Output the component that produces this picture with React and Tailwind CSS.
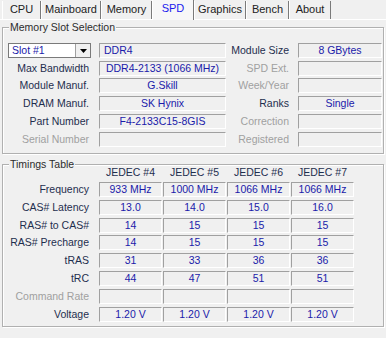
import React from "react";

const FONT = { fontFamily: '"Liberation Sans", Arial, sans-serif' };

function Box({ children, className = "", align = "center" }) {
  const a = align === "left" ? "justify-start pl-[4px]" : "justify-center";
  return (
    <div
      className={`h-[15px] flex items-center ${a} border-t border-l border-t-[#a0a0a0] border-l-[#a0a0a0] border-b border-r border-b-white border-r-white text-[#1a1aaa] leading-none whitespace-nowrap overflow-hidden ${className}`}
    >
      {children}
    </div>
  );
}

function Label({ children, disabled, className = "" }) {
  return (
    <div
      className={`text-right leading-none whitespace-nowrap ${disabled ? "text-[#a0a0a0]" : "text-[#1e2e4e]"} ${className}`}
    >
      {children}
    </div>
  );
}

function Tab({ label, w, selected }) {
  if (selected) {
    return (
      <div
        className={`${w} h-[21px] bg-[#f7f7f7] border-l border-white border-r border-r-[#7a7a7a] flex items-center justify-center text-[#1a1aee] relative z-10 -mb-[1px]`}
      >
        <span className="-mt-[3px]">{label}</span>
      </div>
    );
  }
  return (
    <div
      className={`${w} h-[18px] border-l border-white border-r border-r-[#7a7a7a] flex items-center justify-center text-[#222]`}
    >
      <span className="-mt-[1px]">{label}</span>
    </div>
  );
}

function Group({ title, className = "", children }) {
  return (
    <div className={`relative mx-[2px] border border-[#b0b0b0] shadow-[inset_1px_1px_0_#ffffff,1px_1px_0_#ffffff] ${className}`}>
      <div className="absolute -top-[8px] left-[6px] px-[1px] bg-[#f0f0f0] text-[#2c2c2c] leading-[14px]">
        {title}
      </div>
      {children}
    </div>
  );
}

function InfoRow({ label, labelDisabled, value, valueAlign, rLabel, rDisabled, rValue, className = "" }) {
  return (
    <div className={`flex items-center ${className}`}>
      <Label disabled={labelDisabled} className="w-[86px]">{label}</Label>
      <Box className="ml-[10px] w-[127px]" align={valueAlign}>{value}</Box>
      <Label disabled={rDisabled} className="w-[63px]">{rLabel}</Label>
      <Box className="ml-[9px] w-[84px]">{rValue}</Box>
    </div>
  );
}

function TimingRow({ label, disabled, values, className = "" }) {
  return (
    <div className={`flex items-center ${className}`}>
      <Label disabled={disabled} className="w-[86px]">{label}</Label>
      <div className="ml-[10px] flex gap-[1px]">
        {[0, 1, 2, 3].map((i) => (
          <Box key={i} className="w-[63px]">{values ? values[i] : ""}</Box>
        ))}
      </div>
    </div>
  );
}

export default function App() {
  return (
    <div className="w-[386px] h-[338px] bg-[#f0f0f0] overflow-hidden text-[10.5px]" style={FONT}>
      {/* Tabs */}
      <div className="flex items-end h-[20px] pl-[2px] border-b border-white text-[11px]">
        <Tab label="CPU" w="w-[39px]" />
        <Tab label="Mainboard" w="w-[60px]" />
        <Tab label="Memory" w="w-[51px]" />
        <Tab label="SPD" w="w-[42px]" selected />
        <Tab label="Graphics" w="w-[52px]" />
        <Tab label="Bench" w="w-[43px]" />
        <Tab label="About" w="w-[42px]" />
      </div>

      {/* Memory Slot Selection */}
      <Group title="Memory Slot Selection" className="mt-[7px] h-[127px] pt-[15px]">
        <div className="flex flex-col">
          <div className="flex items-center">
            <div className="ml-[5px] w-[83px] h-[15px] bg-white border border-[#7a7a7a] flex items-center">
              <span className="pl-[3px] flex-1 text-[#1a1aaa] leading-none">Slot #1</span>
              <div className="w-[15px] h-[13px] bg-[#f0f0f0] border-l border-[#a0a0a0] flex items-center justify-center">
                <svg width="7" height="4" viewBox="0 0 7 4">
                  <polygon points="0,0 7,0 3.5,4" fill="#000" />
                </svg>
              </div>
            </div>
            <Box className="ml-[8px] w-[127px]" align="left">DDR4</Box>
            <Label className="w-[63px]">Module Size</Label>
            <Box className="ml-[9px] w-[84px]">8 GBytes</Box>
          </div>
          <InfoRow className="mt-[3px]" label="Max Bandwidth" value="DDR4-2133 (1066 MHz)" rLabel="SPD Ext." rDisabled />
          <InfoRow className="mt-[2px]" label="Module Manuf." value="G.Skill" rLabel="Week/Year" rDisabled />
          <InfoRow className="mt-[3px]" label="DRAM Manuf." value="SK Hynix" rLabel="Ranks" rValue="Single" />
          <InfoRow className="mt-[3px]" label="Part Number" value="F4-2133C15-8GIS" rLabel="Correction" rDisabled />
          <InfoRow className="mt-[3px]" label="Serial Number" labelDisabled rLabel="Registered" rDisabled />
        </div>
      </Group>

      {/* Timings Table */}
      <Group title="Timings Table" className="mt-[10px] h-[163px] pt-[1px]">
        <div className="flex flex-col">
          <div className="flex h-[13px] items-center text-[#1e2e4e]">
            <div className="w-[96px]" />
            <div className="flex gap-[1px]">
              {["JEDEC #4", "JEDEC #5", "JEDEC #6", "JEDEC #7"].map((h) => (
                <div key={h} className="w-[63px] text-center leading-none">{h}</div>
              ))}
            </div>
          </div>
          <TimingRow className="mt-[3px]" label="Frequency" values={["933 MHz", "1000 MHz", "1066 MHz", "1066 MHz"]} />
          <TimingRow className="mt-[3px]" label="CAS# Latency" values={["13.0", "14.0", "15.0", "16.0"]} />
          <TimingRow className="mt-[3px]" label="RAS# to CAS#" values={["14", "15", "15", "15"]} />
          <TimingRow className="mt-[2px]" label="RAS# Precharge" values={["14", "15", "15", "15"]} />
          <TimingRow className="mt-[3px]" label="tRAS" values={["31", "33", "36", "36"]} />
          <TimingRow className="mt-[3px]" label="tRC" values={["44", "47", "51", "51"]} />
          <TimingRow className="mt-[3px]" label="Command Rate" disabled />
          <TimingRow className="mt-[3px]" label="Voltage" values={["1.20 V", "1.20 V", "1.20 V", "1.20 V"]} />
        </div>
      </Group>
    </div>
  );
}
